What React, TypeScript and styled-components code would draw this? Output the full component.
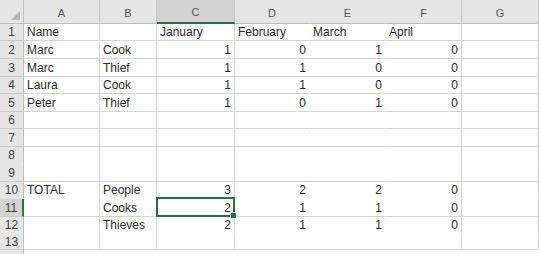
import React from 'react';
import styled, {createGlobalStyle, css} from "styled-components";

type Val = string | number

const columns = [
    {label: 'A', width: 76, line: true},
    {label: 'B', width: 57, line: true},
    {label: 'C', width: 78, line: true},
    {label: 'D', width: 75, line: false},
    {label: 'E', width: 76, line: false},
    {label: 'F', width: 76, line: true},
    {label: 'G', width: 77, line: true},
]

const empty: Val[] = ['', '', '', '', '', '', '']

// height, bottom gridline visible, values A..G
const rows: { h: number, line: boolean, label: string, cells: Val[] }[] = [
    {h: 17, line: true, label: '1', cells: ['Name', '', 'January', 'February', 'March', 'April', '']},
    {h: 18, line: true, label: '2', cells: ['Marc', 'Cook', 1, 0, 1, 0, '']},
    {h: 18, line: true, label: '3', cells: ['Marc', 'Thief', 1, 1, 0, 0, '']},
    {h: 17, line: true, label: '4', cells: ['Laura', 'Cook', 1, 1, 0, 0, '']},
    {h: 18, line: true, label: '5', cells: ['Peter', 'Thief', 1, 0, 1, 0, '']},
    {h: 17, line: true, label: '6', cells: empty},
    {h: 18, line: true, label: '7', cells: empty},
    {h: 17, line: false, label: '8', cells: empty},
    {h: 18, line: true, label: '9', cells: empty},
    {h: 17, line: false, label: '10', cells: ['TOTAL', 'People', 3, 2, 2, 0, '']},
    {h: 18, line: true, label: '11', cells: ['', 'Cooks', 2, 1, 1, 0, '']},
    {h: 17, line: false, label: '12', cells: ['', 'Thieves', 2, 1, 1, 0, '']},
    {h: 16, line: true, label: '13', cells: empty},
]

const activeRow = '11'
const activeCol = 'C'

function App() {
    return (
        <>
            <GlobalStyle/>
            <Sheet $cols={columns.map(c => c.width)} $rows={rows.map(r => r.h)}>
                <Corner><CornerMark/></Corner>
                {columns.map(c => (
                    <ColHead key={c.label} $active={c.label === activeCol} $line={c.line}>{c.label}</ColHead>
                ))}
                {rows.map((r, i) => (
                    <React.Fragment key={i}>
                        <RowHead $active={r.label === activeRow} $line={r.line}>{r.label}</RowHead>
                        {r.cells.map((v, j) => (
                            <Cell
                                key={j}
                                $num={typeof v === 'number'}
                                $line={r.line}
                                $vline={columns[j].line}
                                $selected={r.label === activeRow && columns[j].label === activeCol}
                            >
                                {v}
                            </Cell>
                        ))}
                    </React.Fragment>
                ))}
                {/* row 14 only peeks in at the bottom edge */}
                <RowHead $active={false} $line={false}/>
            </Sheet>
        </>
    );
}

export default App;

const GlobalStyle = createGlobalStyle`
  body {
    margin: 0;
    background: #fff;
    overflow: hidden;
  }
`

const Sheet = styled.div<{ $cols: number[], $rows: number[] }>`
  display: grid;
  grid-template-columns: 24px ${p => p.$cols.map(w => w + 'px').join(' ')};
  grid-template-rows: 24px ${p => p.$rows.map(h => h + 'px').join(' ')} 4px;
  font-family: "Liberation Sans", Arial, sans-serif;
  color: #2a2a2a;
`

const Corner = styled.div`
  position: relative;
  background: #e6e6e6;
  border-right: 1px solid #bdbdbd;
  border-bottom: 1px solid #bdbdbd;
`

const CornerMark = styled.div`
  position: absolute;
  right: 3px;
  bottom: 3px;
  width: 0;
  height: 0;
  border-left: 9px solid transparent;
  border-bottom: 9px solid #b5b5b5;
`

const ColHead = styled.div<{ $active: boolean, $line: boolean }>`
  display: flex;
  align-items: flex-end;
  justify-content: center;
  padding-bottom: 4px;
  box-sizing: border-box;
  font-size: 11px;
  line-height: 1;
  color: #555;
  background: ${p => p.$active ? '#d3d3d3' : '#e6e6e6'};
  border-right: 1px solid ${p => p.$line ? '#c9c9c9' : '#e6e6e6'};
  border-bottom: ${p => p.$active ? '2px solid #217346' : '1px solid #bdbdbd'};
`

const RowHead = styled.div<{ $active: boolean, $line: boolean }>`
  display: flex;
  align-items: center;
  justify-content: center;
  box-sizing: border-box;
  font-size: 12px;
  line-height: 1;
  color: #444;
  background: ${p => p.$active ? '#d3d3d3' : '#e6e6e6'};
  border-right: ${p => p.$active ? '2px solid #217346' : '1px solid #bdbdbd'};
  border-bottom: 1px solid ${p => p.$line ? '#c9c9c9' : '#e6e6e6'};
`

const Cell = styled.div<{ $num: boolean, $line: boolean, $vline: boolean, $selected: boolean }>`
  position: relative;
  display: flex;
  align-items: center;
  justify-content: ${p => p.$num ? 'flex-end' : 'flex-start'};
  padding: ${p => p.$num ? '0 3px 0 0' : '0 0 0 3px'};
  box-sizing: border-box;
  font-size: 12px;
  line-height: 1;
  white-space: nowrap;
  border-right: 1px solid ${p => p.$vline ? '#d4d4d4' : '#fff'};
  border-bottom: 1px solid ${p => p.$line ? '#d4d4d4' : '#fff'};

  ${p => p.$selected && css`
    &::after {
      content: '';
      position: absolute;
      left: -1px;
      top: -2px;
      right: -1px;
      bottom: -1px;
      border: 2px solid #217346;
    }

    &::before {
      content: '';
      position: absolute;
      right: -3px;
      bottom: -3px;
      width: 5px;
      height: 5px;
      background: #217346;
      border: 1px solid #fff;
      z-index: 1;
    }
  `}
`
